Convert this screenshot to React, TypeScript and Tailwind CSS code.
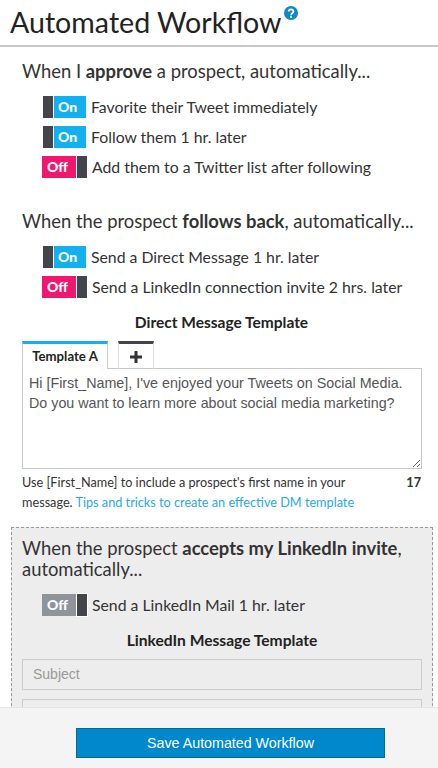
const font = { fontFamily: '"Lato", "Noto Sans", sans-serif' };

const Toggle = ({ on, muted }: { on: boolean; muted?: boolean }) =>
    on ? (
        <div className="flex h-[22px] w-[44px] shrink-0 ml-px gap-px">
            <div className="w-[10px] bg-[#44454b]" />
            <div className="w-[32px] bg-[#13b0f0] pl-[4px] text-[14px] leading-[22px] font-black text-white">On</div>
        </div>
    ) : (
        <div className="flex h-[22px] w-[45px] shrink-0 gap-px">
            <div className={`w-[34px] pl-[5px] text-[14px] leading-[22px] font-black text-white ${muted ? "bg-[#8f949b]" : "bg-[#f0176f]"}`}>Off</div>
            <div className={`w-[10px] bg-[#44454b] ${muted ? "outline outline-1 outline-white" : ""}`} />
        </div>
    );

const Row = ({ on, muted, text }: { on: boolean; muted?: boolean; text: string }) => (
    <div className="flex h-[22px] items-center pl-[20px]">
        <Toggle on={on} muted={muted} />
        <span className={`text-[15.8px] text-[#333] whitespace-nowrap ${on ? "ml-[4px]" : "ml-[5px]"}`}>{text}</span>
    </div>
);

export default function App() {
    return (
        <div className="relative h-[768px] w-[438px] overflow-hidden bg-white" style={font}>
            <div className="h-[47px] border-b-2 border-[#c8c8c8] pl-[10px] flex items-start">
                <h1 className="text-[28.6px] leading-[44px] text-[#222] whitespace-nowrap">Automated Workflow</h1>
                <svg viewBox="0 0 16 16" className="w-[14px] h-[14px] ml-[2px] mt-[6px]">
                    <circle cx="8" cy="8" r="8" fill="#0a88cc" />
                    <path d="M5.3 6.3a2.7 2.4 0 1 1 4.2 2c-1 .6-1.5 1-1.5 1.8" fill="none" stroke="#fff" strokeWidth="2.2" />
                    <rect x="6.9" y="11.2" width="2.2" height="2.2" fill="#fff" />
                </svg>
            </div>

            <div className="px-[22px] pt-[10px]">
                <h2 className="text-[18.4px] leading-[28px] text-[#333] whitespace-nowrap">When I <b>approve</b> a prospect, automatically...</h2>
                <div className="mt-[11px] flex flex-col gap-[8px]">
                    <Row on text="Favorite their Tweet immediately" />
                    <Row on text="Follow them 1 hr. later" />
                    <Row on={false} text="Add them to a Twitter list after following" />
                </div>

                <h2 className="mt-[29px] text-[18.4px] leading-[28px] text-[#333] whitespace-nowrap">When the prospect <b>follows back</b>, automatically...</h2>
                <div className="mt-[11px] flex flex-col gap-[8px]">
                    <Row on text="Send a Direct Message 1 hr. later" />
                    <Row on={false} text="Send a LinkedIn connection invite 2 hrs. later" />
                </div>

                <h3 className="mt-[13px] pl-[5px] text-center text-[15.5px] leading-[22px] font-bold text-[#222]">Direct Message Template</h3>
                <div className="mt-[8px] flex h-[28px] items-stretch">
                    <div className="w-[86px] border-t-[3px] border-x border-t-[#13b0f0] border-x-[#ccc] text-center text-[13.2px] font-bold leading-[24px] text-[#222] bg-white">Template A</div>
                    <div className="ml-[10px] w-[36px] border-t-[3px] border-x border-t-[#44454b] border-x-[#ddd] flex items-center justify-center">
                        <svg viewBox="0 0 12 12" className="w-[12px] h-[12px]"><path d="M6 0v12M0 6h12" stroke="#333" strokeWidth="3" /></svg>
                    </div>
                </div>
                <textarea
                    readOnly
                    defaultValue={"Hi [First_Name], I've enjoyed your Tweets on Social Media. Do you want to learn more about social media marketing?"}
                    className="-mt-px block h-[101px] w-[400px] border border-[#c8c8c8] px-[6px] py-[4px] text-[14.3px] leading-[20px] text-[#555] outline-none"
                    style={{ fontFamily: '"Liberation Sans", sans-serif' }}
                />
                <div className="mt-[3px] -mr-[5px] flex justify-between text-[12.7px] leading-[20px] text-[#333]">
                    <p className="w-[350px]">Use [First_Name] to include a prospect's first name in your message. <span className="text-[#29a9e8]">Tips and tricks to create an effective DM template</span></p>
                    <b>17</b>
                </div>
            </div>

            <div className="ml-[11px] mt-[15px] w-[422px] border border-dashed border-[#999] bg-[#ededed] px-[10px] pt-[10px] h-[300px]">
                <h2 className="text-[18.4px] leading-[21px] text-[#333]">When the prospect <b>accepts my LinkedIn invite</b>, automatically...</h2>
                <div className="mt-[14px]">
                    <Row on={false} muted text="Send a LinkedIn Mail 1 hr. later" />
                </div>
                <h3 className="mt-[13px] text-center text-[15.6px] leading-[22px] font-bold text-[#222]">LinkedIn Message Template</h3>
                <div className="mt-[8px] h-[31px] border border-[#ccc] pl-[10px] text-[14px] leading-[29px] text-[#999]" style={{ fontFamily: '"Liberation Sans", sans-serif' }}>Subject</div>
                <div className="mt-[9px] h-[60px] border border-[#ccc]" />
            </div>

            <div className="absolute bottom-0 left-0 right-0 h-[61px] border-t border-[#e4e4e4] bg-[#f4f4f4] pt-[20px] pl-[76px]">
                <button className="h-[30px] w-[309px] border border-[#0b6690] bg-[#0088cc] pt-[2px] text-[14.25px] text-white" style={{ fontFamily: '"Liberation Sans", sans-serif' }}>Save Automated Workflow</button>
            </div>
        </div>
    );
}
